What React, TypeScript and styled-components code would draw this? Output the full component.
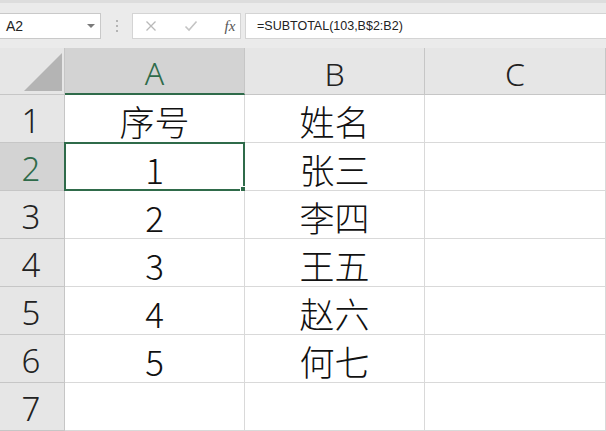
import React from "react";
import styled, { createGlobalStyle } from "styled-components";

const GlobalStyle = createGlobalStyle`
  html, body { margin: 0; padding: 0; background: #ffffff; }
  body { font-family: "Noto Sans", "Noto Sans CJK SC", sans-serif; overflow: hidden; }
`;

const GREEN = "#2f6b4a";
const GRID = "#d9d9d9";
const HEAD_LINE = "#c6c6c6";

const Page = styled.div`
  width: 606px;
  height: 431px;
  overflow: hidden;
  background: #ffffff;
`;

const Toolbar = styled.div`
  height: 48px;
  box-sizing: border-box;
  background: #ebebeb;
  border-top: 3px solid #dddddd;
  display: flex;
  align-items: center;
  padding-top: 1px;
`;

const NameBox = styled.div`
  width: 101px;
  height: 26px;
  box-sizing: border-box;
  background: #ffffff;
  border: 1px solid #c9c9c9;
  border-left: none;
  display: flex;
  align-items: center;
  justify-content: space-between;
  padding: 0 5px 0 6px;
  font-family: "Liberation Sans", "Noto Sans", sans-serif;
  font-size: 14px;
  color: #222;
`;

const Caret = styled.span`
  width: 0;
  height: 0;
  border-left: 4px solid transparent;
  border-right: 4px solid transparent;
  border-top: 4px solid #7a7a7a;
`;

const Grip = styled.div`
  width: 31px;
  display: flex;
  flex-direction: column;
  align-items: center;
  gap: 3px;
`;

const GripDot = styled.span`
  width: 2px;
  height: 2px;
  background: #b4b4b4;
`;

const FxBox = styled.div`
  width: 109px;
  height: 26px;
  box-sizing: border-box;
  background: #ffffff;
  border: 1px solid #d4d4d4;
  display: flex;
  align-items: center;
  padding-left: 12px;
`;

const FxIcon = styled.span<{ $w: number }>`
  width: ${(p) => p.$w}px;
  display: flex;
  align-items: center;
  justify-content: center;
`;

const FxText = styled.span`
  font-family: "Liberation Serif", serif;
  font-style: italic;
  font-size: 15px;
  color: #555;
`;

const FormulaInput = styled.div`
  margin-left: 4px;
  flex: 1;
  height: 26px;
  box-sizing: border-box;
  background: #ffffff;
  border: 1px solid #d4d4d4;
  border-right: none;
  display: flex;
  align-items: center;
  padding-left: 11px;
  font-family: "Liberation Sans", "Noto Sans", sans-serif;
  font-size: 12.5px;
  color: #222;
`;

const Sheet = styled.div`
  display: grid;
  grid-template-columns: 65px 180px 180px 181px;
  grid-template-rows: 47px repeat(7, 48px);
`;

const Corner = styled.div`
  background: #e6e6e6;
  border-right: 1px solid ${HEAD_LINE};
  border-bottom: 1px solid ${HEAD_LINE};
  display: flex;
  align-items: flex-end;
  justify-content: flex-end;
  padding: 0 2px 3px 0;
`;

const ColHead = styled.div<{ $active?: boolean }>`
  background: ${(p) => (p.$active ? "#d3d3d3" : "#e6e6e6")};
  color: ${(p) => (p.$active ? GREEN : "#222")};
  border-right: 1px solid ${HEAD_LINE};
  border-bottom: ${(p) => (p.$active ? `2px solid ${GREEN}` : `1px solid ${HEAD_LINE}`)};
  display: flex;
  align-items: center;
  justify-content: center;
  font-family: "Noto Sans", sans-serif;
  font-weight: 300;
  font-size: 32px;
  padding-top: 4px;
  box-sizing: border-box;
`;

const RowHead = styled.div<{ $active?: boolean }>`
  background: ${(p) => (p.$active ? "#d3d3d3" : "#e6e6e6")};
  color: ${(p) => (p.$active ? GREEN : "#222")};
  border-right: 1px solid ${HEAD_LINE};
  border-bottom: 1px solid ${HEAD_LINE};
  display: flex;
  align-items: center;
  justify-content: center;
  font-family: "Noto Sans", sans-serif;
  font-weight: 300;
  font-size: 33px;
  padding: 4px 2px 0 0;
  box-sizing: border-box;
`;

const Cell = styled.div`
  position: relative;
  background: #ffffff;
  border-right: 1px solid ${GRID};
  border-bottom: 1px solid ${GRID};
  display: flex;
  align-items: center;
  justify-content: center;
  font-family: "Noto Sans CJK SC", "Noto Sans", sans-serif;
  font-weight: 300;
  font-size: 35px;
  color: #111;
  padding-top: 4px;
  box-sizing: border-box;
`;

const Selection = styled.div`
  position: absolute;
  left: -1px;
  top: -1px;
  right: -1px;
  bottom: -1px;
  border: 2px solid ${GREEN};
  pointer-events: none;
`;

const Handle = styled.div`
  position: absolute;
  right: -4px;
  bottom: -4px;
  width: 5px;
  height: 5px;
  background: ${GREEN};
  border: 1px solid #ffffff;
`;

const rows: [string, string][] = [
  ["序号", "姓名"],
  ["1", "张三"],
  ["2", "李四"],
  ["3", "王五"],
  ["4", "赵六"],
  ["5", "何七"],
  ["", ""],
];

export default function App() {
  return (
    <Page>
      <GlobalStyle />
      <Toolbar>
        <NameBox>
          <span>A2</span>
          <Caret />
        </NameBox>
        <Grip>
          <GripDot />
          <GripDot />
          <GripDot />
        </Grip>
        <FxBox>
          <FxIcon $w={12}>
            <svg width="12" height="12" viewBox="0 0 12 12">
              <path d="M1.5 1.5 L10.5 10.5 M10.5 1.5 L1.5 10.5" stroke="#b9b9b9" strokeWidth="1.3" fill="none" />
            </svg>
          </FxIcon>
          <FxIcon $w={67}>
            <svg width="14" height="12" viewBox="0 0 14 12">
              <path d="M1.5 6.5 L5 10 L12.5 1.5" stroke="#c4c4c4" strokeWidth="1.6" fill="none" />
            </svg>
          </FxIcon>
          <FxIcon $w={12}>
            <FxText>fx</FxText>
          </FxIcon>
        </FxBox>
        <FormulaInput>=SUBTOTAL(103,B$2:B2)</FormulaInput>
      </Toolbar>
      <Sheet>
        <Corner>
          <svg width="38" height="38" viewBox="0 0 38 38">
            <polygon points="38,0 38,38 0,38" fill="#b4b4b4" />
          </svg>
        </Corner>
        <ColHead $active>A</ColHead>
        <ColHead>B</ColHead>
        <ColHead>C</ColHead>
        {rows.map(([a, b], i) => (
          <React.Fragment key={i}>
            <RowHead $active={i === 1}>{i + 1}</RowHead>
            <Cell>
              {a}
              {i === 1 && (
                <Selection>
                  <Handle />
                </Selection>
              )}
            </Cell>
            <Cell>{b}</Cell>
            <Cell />
          </React.Fragment>
        ))}
      </Sheet>
    </Page>
  );
}
